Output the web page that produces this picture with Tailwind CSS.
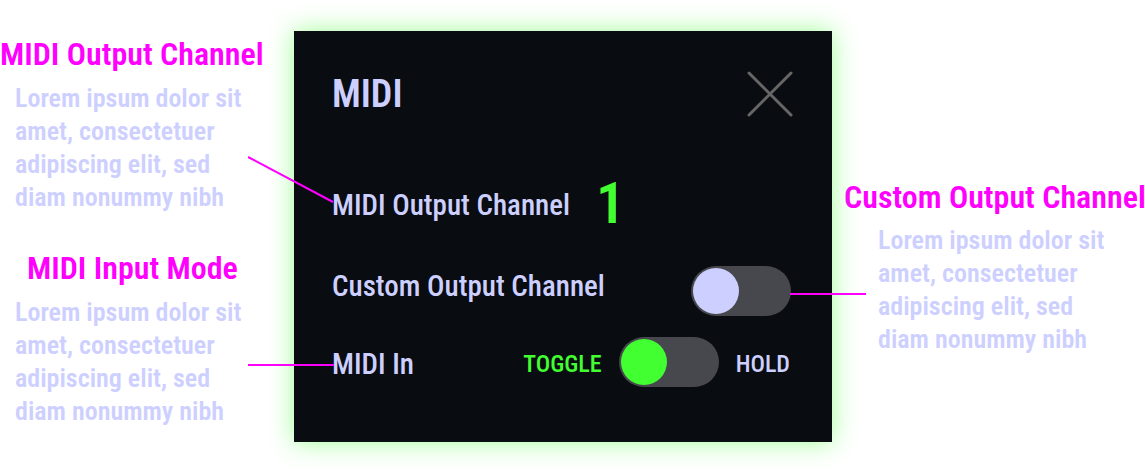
<!DOCTYPE html>
<html lang="en">
<head>
<meta charset="utf-8">
<meta name="viewport" content="width=device-width, initial-scale=1">
<title>MIDI settings</title>
<script src="https://cdn.jsdelivr.net/npm/@tailwindcss/browser@4"></script>
</head>
<body class="min-h-screen bg-white font-['Roboto_Condensed','Liberation_Sans_Narrow','Liberation_Sans',sans-serif] text-[#cdd0ff]">
<div class="grid min-h-screen grid-cols-[minmax(0,294fr)_minmax(0,538fr)_minmax(0,313fr)] items-start">
  <aside class="pt-[34px]">
    <section class="h-[214px]">
      <h2 class="whitespace-nowrap text-[32px] leading-[40px] font-semibold text-[#ff00ff]">MIDI Output Channel</h2>
      <p class="pt-[8px] pl-[15px] text-[26px] leading-[33px] font-semibold whitespace-nowrap">Lorem ipsum dolor sit<br>amet, consectetuer<br>adipiscing elit, sed<br>diam nonummy nibh</p>
    </section>
    <section>
      <h2 class="pl-[27px] whitespace-nowrap text-[32px] leading-[40px] font-semibold text-[#ff00ff]">MIDI Input Mode</h2>
      <p class="pt-[8px] pl-[15px] text-[26px] leading-[33px] font-semibold whitespace-nowrap">Lorem ipsum dolor sit<br>amet, consectetuer<br>adipiscing elit, sed<br>diam nonummy nibh</p>
    </section>
  </aside>

  <main class="relative mt-[31px] bg-[#090c11] pt-[40px] pr-[39px] pb-[55px] pl-[38px] shadow-[0_0_24px_rgba(65,255,48,0.5)]">
    <header class="flex h-[46px] items-center justify-between">
      <h1 class="text-[38px] leading-[46px] font-semibold">MIDI</h1>
      <button type="button" aria-label="Close" class="size-[46px]">
        <svg viewBox="0 0 46 46" class="size-full" fill="none" stroke="#666" stroke-width="3" stroke-linecap="round"><path d="M2 2L44 44M44 2L2 44"/></svg>
      </button>
    </header>
    <div class="mt-[61px] flex h-[50px] items-center gap-[26px]">
      <span class="pt-[4px] text-[29px] leading-[46px] font-medium">MIDI Output Channel</span>
      <output class="text-[58px] leading-[50px] font-semibold text-[#41ff30]">1</output>
    </div>
    <div class="mt-[38px] flex h-[50px] items-center justify-between pr-[2px]">
      <label for="custom" class="pb-[10px] text-[29px] leading-[40px] font-medium">Custom Output Channel</label>
      <input id="custom" type="checkbox" role="switch" class="h-[50px] w-[100px] appearance-none rounded-full bg-[#47484d] p-[2px] before:block before:size-[46px] before:rounded-full before:bg-[#cdd0ff]">
    </div>
    <div class="mt-[21px] flex h-[50px] items-center justify-between pr-[3px]">
      <span class="pt-[4px] text-[29px] leading-[46px] font-medium">MIDI In</span>
      <div class="flex items-center gap-[17px] text-[24px] leading-[46px] font-medium">
        <label for="mode" class="pt-[4px] text-[#41ff30]">TOGGLE</label>
        <input id="mode" type="checkbox" role="switch" class="h-[50px] w-[100px] appearance-none rounded-full bg-[#47484d] p-[2px] before:block before:size-[46px] before:rounded-full before:bg-[#41ff30]">
        <label for="mode" class="pt-[4px]">HOLD</label>
      </div>
    </div>
    <svg class="pointer-events-none absolute top-[124px] -left-[46px] h-[50px] w-[86px]" stroke="#ff00ff" stroke-width="2"><path d="M0 2L85 47"/></svg>
    <svg class="pointer-events-none absolute top-[333px] -left-[46px] h-[2px] w-[86px]" stroke="#ff00ff" stroke-width="2"><path d="M0 1H86"/></svg>
    <svg class="pointer-events-none absolute top-[262px] -right-[34px] h-[2px] w-[76px]" stroke="#ff00ff" stroke-width="2"><path d="M0 1H76"/></svg>
  </main>

  <aside class="pt-[177px] pl-[12px]">
    <h2 class="whitespace-nowrap text-[32px] leading-[40px] font-semibold text-[#ff00ff]">Custom Output Channel</h2>
    <p class="pt-[7px] pl-[34px] text-[26px] leading-[33px] font-semibold whitespace-nowrap">Lorem ipsum dolor sit<br>amet, consectetuer<br>adipiscing elit, sed<br>diam nonummy nibh</p>
  </aside>
</div>
</body>
</html>
